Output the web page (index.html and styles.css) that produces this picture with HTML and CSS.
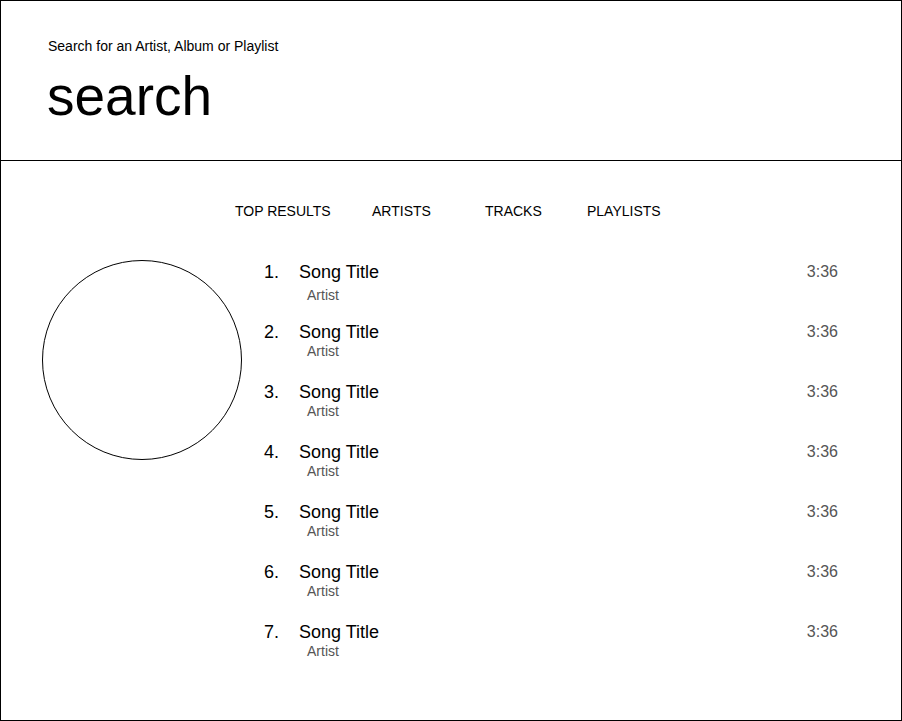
FILE: index.html
```html
<!DOCTYPE html>
<html lang="en">
<head>
<meta charset="utf-8">
<title>Search</title>
<link rel="stylesheet" href="styles.css">
</head>
<body>
<div class="frame">
  <header class="search-header">
    <label class="search-label" for="q">Search for an Artist, Album or Playlist</label>
    <div class="search-input" id="q">search</div>
  </header>
  <main class="results">
    <nav class="tabs">
      <span class="tab tab-top">TOP RESULTS</span>
      <span class="tab tab-artists">ARTISTS</span>
      <span class="tab tab-tracks">TRACKS</span>
      <span class="tab">PLAYLISTS</span>
    </nav>
    <section class="content">
      <div class="cover"></div>
      <ol class="tracks">
        <li class="track first">
          <span class="num">1.</span>
          <div class="info"><div class="title">Song Title</div><div class="artist">Artist</div></div>
          <span class="time">3:36</span>
        </li>
        <li class="track">
          <span class="num">2.</span>
          <div class="info"><div class="title">Song Title</div><div class="artist">Artist</div></div>
          <span class="time">3:36</span>
        </li>
        <li class="track">
          <span class="num">3.</span>
          <div class="info"><div class="title">Song Title</div><div class="artist">Artist</div></div>
          <span class="time">3:36</span>
        </li>
        <li class="track">
          <span class="num">4.</span>
          <div class="info"><div class="title">Song Title</div><div class="artist">Artist</div></div>
          <span class="time">3:36</span>
        </li>
        <li class="track">
          <span class="num">5.</span>
          <div class="info"><div class="title">Song Title</div><div class="artist">Artist</div></div>
          <span class="time">3:36</span>
        </li>
        <li class="track">
          <span class="num">6.</span>
          <div class="info"><div class="title">Song Title</div><div class="artist">Artist</div></div>
          <span class="time">3:36</span>
        </li>
        <li class="track">
          <span class="num">7.</span>
          <div class="info"><div class="title">Song Title</div><div class="artist">Artist</div></div>
          <span class="time">3:36</span>
        </li>
      </ol>
    </section>
  </main>
</div>
</body>
</html>
```
FILE: styles.css
```css
* { box-sizing: border-box; }
html, body { margin: 0; padding: 0; background: #fff; }
body {
  font-family: "Liberation Sans", Arial, Helvetica, sans-serif;
  color: #000;
}
.frame {
  width: 902px;
  height: 721px;
  border: 1px solid #000;
  display: flex;
  flex-direction: column;
}
.search-header {
  height: 160px;
  border-bottom: 1px solid #000;
  padding: 37px 0 0 47px;
}
.search-label {
  display: block;
  font-size: 14px;
  line-height: 16px;
}
.search-input {
  margin-top: 15px;
  margin-left: -1px;
  font-size: 55px;
  line-height: 55px;
}
.results {
  flex: 1;
  padding: 42px 63px 0 41px;
}
.tabs {
  display: flex;
  padding-left: 193px;
  font-size: 14px;
  line-height: 16px;
}
.tab-top { width: 137px; }
.tab-artists { width: 113px; }
.tab-tracks { width: 102px; }
.content {
  display: flex;
  margin-top: 41px;
  gap: 21px;
}
.cover {
  flex: none;
  width: 200px;
  height: 200px;
  border: 1px solid #000;
  border-radius: 50%;
}
.tracks {
  flex: 1;
  list-style: none;
  margin: 0;
  padding: 3px 0 0;
}
.track {
  display: flex;
  align-items: flex-start;
  height: 60px;
}
.num {
  width: 36px;
  padding-left: 1px;
  font-size: 18px;
  line-height: 18px;
}
.info { flex: 1; }
.title {
  font-size: 18px;
  line-height: 18px;
}
.artist {
  font-size: 14px;
  line-height: 14px;
  color: #555;
  padding-left: 8px;
  margin-top: 3px;
}
.track.first .artist { margin-top: 7px; }
.time {
  font-size: 16px;
  line-height: 18px;
  color: #555;
}
```
